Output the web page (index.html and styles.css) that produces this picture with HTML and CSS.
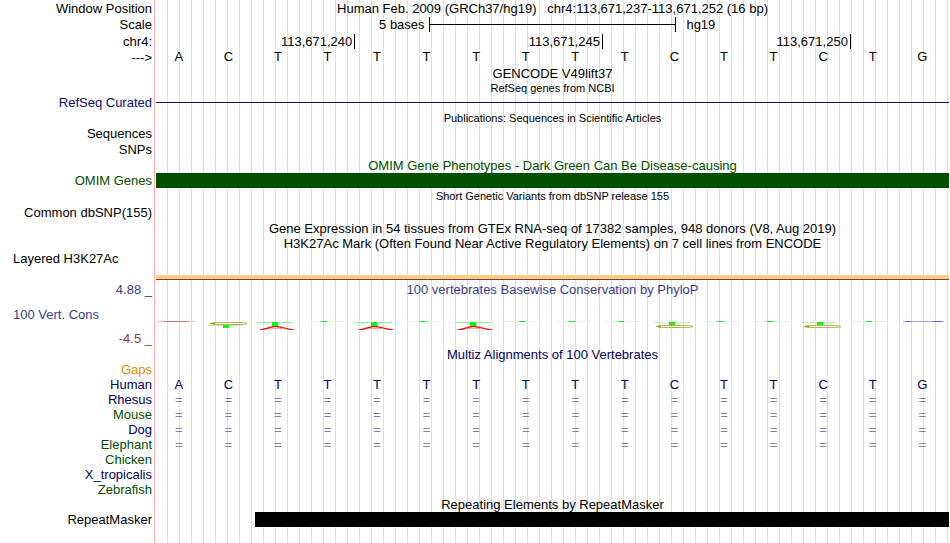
FILE: index.html
```html
<!DOCTYPE html>
<html lang="en">
<head>
<meta charset="utf-8">
<title>Genome Browser hg19 chr4:113,671,237-113,671,252</title>
<link rel="stylesheet" href="styles.css">
</head>
<body>
<svg class="defs" aria-hidden="true">
  <symbol id="a" viewBox="0 0 46 12"><path d="M2 3.5H39" stroke="#ffb0b0"/><path d="M9 3.5H32" stroke="#e87070"/></symbol>
  <symbol id="t" viewBox="0 0 46 12"><path d="M2 3.5H38" stroke="#e2f7e2"/><path d="M16 3.5H22" stroke="#00f020"/></symbol>
  <symbol id="ct" viewBox="0 0 46 12"><path d="M2 7.5H37" stroke="#b0f5b0"/><path d="M41 5.2Q38 4.5 32 4.5H14Q7 4.5 4 5.5Q7 6.5 14 6.5H32Q38 6.5 41 5.8" fill="none" stroke="#bcb450"/><path d="M3 5.5L9 4.5V6.5Z" fill="#a09800"/><path d="M17 7h6v3h-6z" fill="#0f0"/></symbol>
  <symbol id="ta" viewBox="0 0 46 12"><path d="M2 4.5H38" stroke="#80ff80"/><path d="M17 4h6v4h-6z" fill="#0f0"/><path d="M3 12L18 8h5L41 12H35L30 10.8H13L9 12Z" fill="#f00"/><path d="M13 10.5L20 9L30 10.5Z" fill="#fff"/><path d="M14 10.5H29" stroke="#ffa0a0"/></symbol>
  <symbol id="tc" viewBox="0 0 46 12"><path d="M2 4.5H37" stroke="#b0f5b0"/><path d="M41 8.2Q38 7.5 32 7.5H14Q7 7.5 4 8.5Q7 9.5 14 9.5H32Q38 9.5 41 8.8" fill="none" stroke="#bcb450"/><path d="M3 8.5L9 7.5V9.5Z" fill="#a09800"/><path d="M17 4h6v3h-6z" fill="#0f0"/></symbol>
  <symbol id="g" viewBox="0 0 46 12"><path d="M4 3.5H45" stroke="#a0a0f8"/><path d="M6 3.5H12M34 3.5H43" stroke="#6060f0"/></symbol>
</svg>
<main class="browser">
  <div class="row r16"><span class="label">Window Position</span><div class="title">Human Feb. 2009 (GRCh37/hg19) &nbsp; chr4:113,671,237-113,671,252 (16 bp)</div></div>
  <div class="row r17"><span class="label">Scale</span>
    <div class="scale"><span class="scale-size">5 bases</span><span class="scale-bar"></span><span class="scale-db">hg19</span></div></div>
  <div class="row r17"><span class="label">chr4:</span>
    <div class="ticks"><span class="tick first">113,671,240</span><span class="tick">113,671,245</span><span class="tick">113,671,250</span></div></div>
  <div class="bases sequence"><span class="label">---&gt;</span><span>A</span><span>C</span><span>T</span><span>T</span><span>T</span><span>T</span><span>T</span><span>T</span><span>T</span><span>T</span><span>C</span><span>T</span><span>T</span><span>C</span><span>T</span><span>G</span></div>
  <div class="row"><div class="title">GENCODE V49lift37</div></div>
  <div class="row r14"><div class="title small">RefSeq genes from NCBI</div></div>
  <div class="row"><span class="label refseq">RefSeq Curated</span><div class="intron"></div></div>
  <div class="row r16"><div class="title small">Publications: Sequences in Scientific Articles</div></div>
  <div class="row"><span class="label">Sequences</span></div>
  <div class="row r17"><span class="label">SNPs</span></div>
  <div class="row"><div class="title green">OMIM Gene Phenotypes - Dark Green Can Be Disease-causing</div></div>
  <div class="row"><span class="label green">OMIM Genes</span><div class="bar omim"></div></div>
  <div class="row r17"><div class="title small">Short Genetic Variants from dbSNP release 155</div></div>
  <div class="row"><span class="label">Common dbSNP(155)</span></div>
  <div class="row r16"><div class="title">Gene Expression in 54 tissues from GTEx RNA-seq of 17382 samples, 948 donors (V8, Aug 2019)</div></div>
  <div class="row"><div class="title">H3K27Ac Mark (Often Found Near Active Regulatory Elements) on 7 cell lines from ENCODE</div></div>
  <div class="row signal"><span class="label wide">Layered H3K27Ac</span><div class="histone"></div></div>
  <div class="row r18"><span class="label phylop">4.88 _</span><div class="title phylop">100 vertebrates Basewise Conservation by PhyloP</div></div>
  <div class="row cons"><span class="label wide phylop">100 Vert. Cons</span>
    <div class="logos">
      <svg><use href="#a"/></svg><svg><use href="#ct"/></svg><svg><use href="#ta"/></svg><svg><use href="#t"/></svg>
      <svg><use href="#ta"/></svg><svg><use href="#t"/></svg><svg><use href="#ta"/></svg><svg><use href="#t"/></svg>
      <svg><use href="#t"/></svg><svg><use href="#t"/></svg><svg><use href="#tc"/></svg><svg><use href="#t"/></svg>
      <svg><use href="#t"/></svg><svg><use href="#tc"/></svg><svg><use href="#t"/></svg><svg><use href="#g"/></svg>
    </div></div>
  <div class="row r17"><span class="label negative">-4.5 _</span></div>
  <div class="row"><div class="title navy">Multiz Alignments of 100 Vertebrates</div></div>
  <table class="alignment">
    <tbody>
      <tr class="bases"><th class="label gaps" scope="row">Gaps</th></tr>
      <tr class="bases navy"><th class="label" scope="row">Human</th><td>A</td><td>C</td><td>T</td><td>T</td><td>T</td><td>T</td><td>T</td><td>T</td><td>T</td><td>T</td><td>C</td><td>T</td><td>T</td><td>C</td><td>T</td><td>G</td></tr>
      <tr class="bases match"><th class="label navy" scope="row">Rhesus</th><td>=</td><td>=</td><td>=</td><td>=</td><td>=</td><td>=</td><td>=</td><td>=</td><td>=</td><td>=</td><td>=</td><td>=</td><td>=</td><td>=</td><td>=</td><td>=</td></tr>
      <tr class="bases match"><th class="label green" scope="row">Mouse</th><td>=</td><td>=</td><td>=</td><td>=</td><td>=</td><td>=</td><td>=</td><td>=</td><td>=</td><td>=</td><td>=</td><td>=</td><td>=</td><td>=</td><td>=</td><td>=</td></tr>
      <tr class="bases match"><th class="label navy" scope="row">Dog</th><td>=</td><td>=</td><td>=</td><td>=</td><td>=</td><td>=</td><td>=</td><td>=</td><td>=</td><td>=</td><td>=</td><td>=</td><td>=</td><td>=</td><td>=</td><td>=</td></tr>
      <tr class="bases match"><th class="label green" scope="row">Elephant</th><td>=</td><td>=</td><td>=</td><td>=</td><td>=</td><td>=</td><td>=</td><td>=</td><td>=</td><td>=</td><td>=</td><td>=</td><td>=</td><td>=</td><td>=</td><td>=</td></tr>
      <tr class="bases"><th class="label green" scope="row">Chicken</th></tr>
      <tr class="bases"><th class="label navy" scope="row">X_tropicalis</th></tr>
      <tr class="bases"><th class="label green" scope="row">Zebrafish</th></tr>
    </tbody>
  </table>
  <div class="row"><div class="title">Repeating Elements by RepeatMasker</div></div>
  <div class="row"><span class="label">RepeatMasker</span><div class="bar repeat"></div></div>
</main>
</body>
</html>
```
FILE: styles.css
```css
body {
  margin: 0;
  background: #fff;
  color: #000;
  font: 13px/15px "Liberation Sans", Arial, sans-serif;
}

.defs {
  display: none;
}

/* Pink divider and guide lines every 12px behind all the tracks */
.browser {
  min-height: 100vh;
  margin-right: 1px;
  background:
    linear-gradient(#ffb0b0, #ffb0b0) 154px 0 / 1px 100% no-repeat,
    repeating-linear-gradient(90deg, transparent 0 11px, #dcdcf5 11px 12px) 156px 0 no-repeat;
}

.row {
  display: grid;
  grid-template-columns: 152px 1fr;
  column-gap: 4px;
  align-items: center;
  min-height: 15px;
}

.r14 {
  min-height: 14px;
  line-height: 14px;
}

.r16 { min-height: 16px; }
.r17 { min-height: 17px; }
.r18 { min-height: 18px; }

.label {
  padding: 0;
  font-weight: normal;
  text-align: right;
  white-space: nowrap;
}

.wide {
  padding-left: 13px;
  text-align: left;
}

.title {
  grid-column: 2;
  text-align: center;
  white-space: nowrap;
}

.small { font-size: 11px; }

.green { color: #005000; }
.navy { color: #000064; }
.refseq { color: #0c0c78; }
.phylop { color: #3c3c8c; }
.negative { color: #8c3c3c; }
.gaps { color: #e68a00; }

.scale {
  display: grid;
  grid-template-columns: 1fr 31.25% 1fr;
  align-items: center;
}

.scale-size {
  padding-right: 4px;
  text-align: right;
}

.scale-bar {
  height: 15px;
  box-sizing: border-box;
  border: solid #000;
  border-width: 0 1px;
  background: linear-gradient(#000, #000) 0 7px / 100% 1px no-repeat;
}

.scale-db { padding-left: 10px; }

.ticks {
  display: grid;
  grid-template-columns: repeat(16, 1fr);
}

.tick {
  grid-column: span 5;
  margin-right: -1px;
  padding-right: 2px;
  border-right: 1px solid #000;
  text-align: right;
}

.first { grid-column: span 4; }

.bases {
  display: grid;
  grid-template-columns: 154px repeat(16, 1fr);
  min-height: 15px;
  padding-right: 2px;
  text-align: center;
}

.bases .label { padding-right: 2px; }

.sequence {
  min-height: 16px;
  line-height: 13px;
}

.sequence .label { line-height: 16px; }

.alignment {
  display: block;
  border-spacing: 0;
}

.alignment tbody { display: block; }
.alignment td { padding: 0; }
.match td { color: #8080b4; }

.intron {
  height: 1px;
  background: #0c0c78;
}

.bar { height: 15px; }
.omim { background: #005000; }

/* The repeat starts two bases into the window */
.repeat {
  margin-left: 12.5%;
  background: #000;
}

.signal {
  min-height: 29px;
  align-items: start;
}

.histone {
  height: 4px;
  align-self: end;
  border-bottom: 1px solid #783c50;
  background: #ffd080;
}

.cons { min-height: 32px; }

.logos {
  display: grid;
  grid-template-columns: repeat(16, 1fr);
  align-self: end;
}

.logos svg {
  width: 46px;
  height: 12px;
}
```
